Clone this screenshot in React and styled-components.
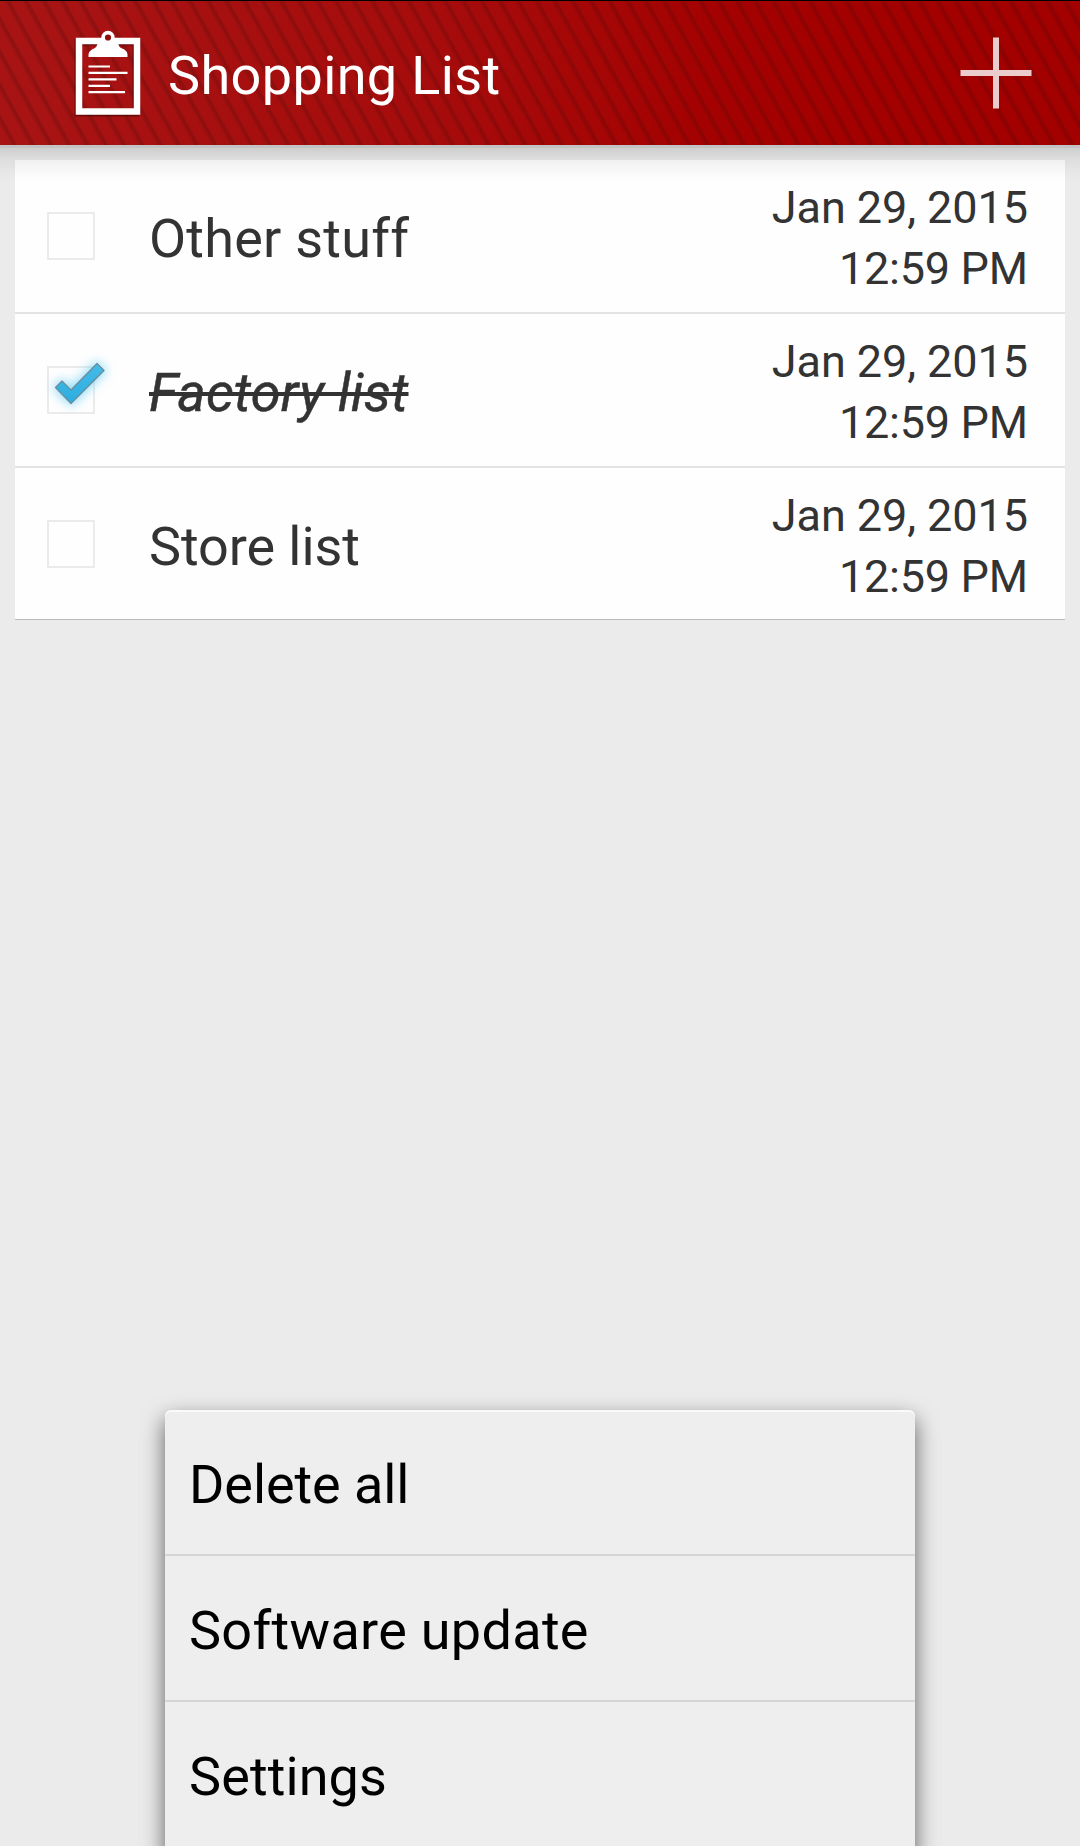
import React from "react";
import styled, { createGlobalStyle } from "styled-components";

const GlobalStyle = createGlobalStyle`
  * { box-sizing: border-box; }
  html, body { margin: 0; background: #ebebeb; overflow: hidden; }
  body { font-family: Roboto, "Noto Sans", sans-serif; }
`;

const Screen = styled.div`
  position: relative;
  display: flex;
  flex-direction: column;
  width: 1080px;
  height: 1846px;
  overflow: hidden;
  background: #ebebeb;
`;

const Header = styled.header`
  position: relative;
  display: flex;
  align-items: center;
  flex: none;
  height: 145px;
  padding: 0 48px 0 74px;
  border-top: 1px solid #000;
  background:
    repeating-linear-gradient(61deg, rgba(60, 10, 10, 0) 0 9px, rgba(60, 10, 10, 0.23) 12.5px 13.5px, rgba(60, 10, 10, 0) 15.95px),
    linear-gradient(100deg, #a81414 0%, #a60c0c 40%, #a40202 65%, #a30000 80%);

  &::after {
    content: "";
    position: absolute;
    left: 0;
    right: 0;
    top: 100%;
    height: 38px;
    background: linear-gradient(
      rgba(0, 0, 0, 0.17) 0 3px,
      rgba(0, 0, 0, 0.12) 3px,
      rgba(0, 0, 0, 0.055) 15px,
      rgba(0, 0, 0, 0.012) 30px,
      rgba(0, 0, 0, 0)
    );
  }
`;

const Title = styled.h1`
  flex: 1;
  margin: 0 0 0 26px;
  padding-top: 6px;
  color: #fff;
  font-size: 54px;
  font-weight: 400;
  line-height: 64px;
  letter-spacing: 0.38px;
`;

const AddButton = styled.button`
  display: flex;
  padding: 0;
  border: 0;
  background: none;
`;

const List = styled.ul`
  flex: none;
  margin: 15px 15px 0;
  padding: 0;
  list-style: none;
  background: #fefefe;
  border-bottom: 1px solid #b9bbbb;
`;

const Row = styled.li`
  display: flex;
  align-items: center;
  height: 154px;
  padding: 0 37px 0 32px;
  border-bottom: 2px solid #e3e3e3;

  &:last-child {
    height: 151px;
    padding-top: 1px;
    border-bottom: 0;
  }
`;

const CheckBox = styled.span`
  display: block;
  flex: none;
  width: 48px;
  height: 48px;
  border: 2px solid #ebebeb;

  svg { display: block; margin: -22px 0 0 -12px; }
`;

const Name = styled.span`
  flex: 1;
  margin-left: 54px;
  padding-top: 5px;
  color: #333;
  font-size: 54px;
  line-height: 64px;
  letter-spacing: ${(p) => p.$spacing}px;
  font-style: ${(p) => (p.$done ? "italic" : "normal")};
  text-decoration: ${(p) => (p.$done ? "line-through 4px" : "none")};
  -webkit-text-stroke: ${(p) => (p.$done ? "0.5px #333" : "0")};
`;

const Stamp = styled.time`
  padding-top: 3px;
  color: #333;
  font-size: 45px;
  line-height: 61px;
  text-align: right;
`;

const StampLine = styled.span`
  display: block;
  letter-spacing: ${(p) => p.$spacing}px;
  margin-right: ${(p) => -p.$spacing}px;
`;

const Menu = styled.nav`
  position: absolute;
  left: 165px;
  top: 1410px;
  width: 750px;
  height: 450px;
  border-radius: 6px 6px 0 0;
  background: #eee;
  box-shadow: inset 0 2px 0 #fafafa, 0 9px 22px rgba(0, 0, 0, 0.6);
`;

const MenuItem = styled.div`
  display: flex;
  align-items: center;
  height: 146px;
  padding: 6px 24px 0;
  border-bottom: 2px solid #d5d5d5;
  color: #000;
  font-size: 54px;
  line-height: 64px;
  letter-spacing: ${(p) => p.$spacing}px;

  &:last-child {
    height: 144px;
    border-bottom: 0;
  }
`;

const Clipboard = () => (
  <svg width="68" height="88" viewBox="74 29 68 88" fill="none">
    <g transform="translate(-1 1)" opacity=".35">
      <rect x="79" y="41" width="58" height="71" stroke="#000" strokeWidth="7" />
    </g>
    <rect x="79" y="41" width="58" height="70.5" stroke="#fff" strokeWidth="6.5" />
    <path d="M88.5 57v-2c0-4 4-6 6.500-7 2.500-1.500 2-5 4-7h18c2 2 1 5.500 4 7 3 1 6.500 3 6.500 7v2z" fill="#fff" />
    <circle cx="108" cy="37.500" r="4.900" stroke="#fff" strokeWidth="3.600" fill="#8b1111" />
    <path d="M88.500 66.500h21.500M88.500 72.800h39M88.500 79.300h28M88.500 85.800h21.500M88.500 92.200h36.500" stroke="#fff" strokeWidth="2.200" />
  </svg>
);

const Plus = () => (
  <svg width="72" height="72" viewBox="0 0 72 72">
    <path d="M33 .5h6V33h32.500v6H39v32.500h-6V39H.5v-6H33z" fill="#ebcccc" />
  </svg>
);

const Tick = () => (
  <svg width="84" height="76" viewBox="37 346 84 76">
    <defs>
      <filter id="halo" x="-60%" y="-60%" width="220%" height="220%">
        <feGaussianBlur stdDeviation="5.500" />
      </filter>
      <linearGradient id="sky" x1="0" y1="0" x2="0" y2="1">
        <stop offset="0" stopColor="#45bbe8" />
        <stop offset="1" stopColor="#2bade0" />
      </linearGradient>
    </defs>
    <path d="M55.500 387.500l6.500-6.500 9 9 26-26.500 7 7-33 33z" fill="#5ccbf2" stroke="#5ccbf2" strokeWidth="4" filter="url(#halo)" opacity=".7" />
    <path d="M55.500 387.500l6.500-6.500 9 9 26-26.500 7 7-33 33z" fill="url(#sky)" stroke="#6d8b98" strokeWidth="1.200" strokeLinejoin="round" />
  </svg>
);

const items = [
  { name: "Other stuff", spacing: 0.22, done: false },
  { name: "Factory list", spacing: 0.26, done: true },
  { name: "Store list", spacing: -0.08, done: false },
];

const actions = [
  { label: "Delete all", spacing: -0.08 },
  { label: "Software update", spacing: 0.3 },
  { label: "Settings", spacing: 0.1 },
];

export default function App() {
  return (
    <Screen>
      <GlobalStyle />
      <Header>
        <Clipboard />
        <Title>Shopping List</Title>
        <AddButton aria-label="Add"><Plus /></AddButton>
      </Header>
      <List>
        {items.map((item) => (
          <Row key={item.name}>
            <CheckBox>{item.done && <Tick />}</CheckBox>
            <Name $done={item.done} $spacing={item.spacing}>{item.name}</Name>
            <Stamp>
              <StampLine $spacing={-0.08}>Jan 29, 2015</StampLine>
              <StampLine $spacing={-0.28}>12:59 PM</StampLine>
            </Stamp>
          </Row>
        ))}
      </List>
      <Menu>
        {actions.map((a) => (
          <MenuItem key={a.label} $spacing={a.spacing}>{a.label}</MenuItem>
        ))}
      </Menu>
    </Screen>
  );
}
